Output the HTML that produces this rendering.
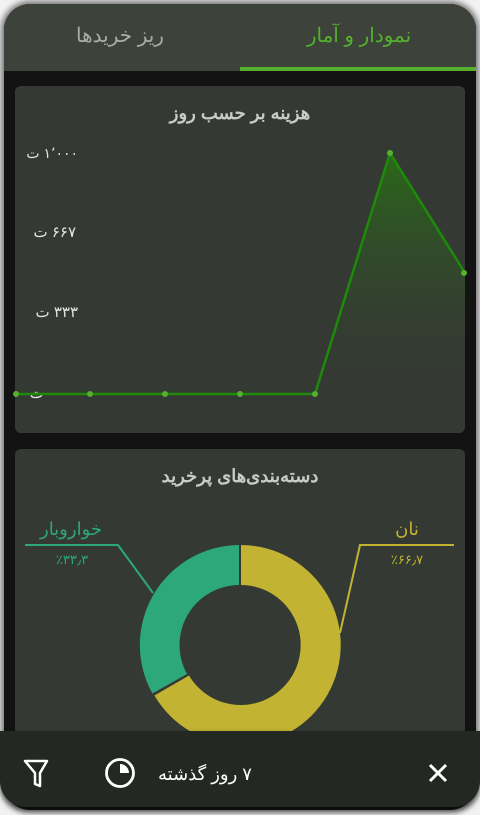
<!DOCTYPE html>
<html><head><meta charset="utf-8"><style>
*{margin:0;padding:0;box-sizing:border-box}
body{width:480px;height:815px;background:#f2f2f2;overflow:hidden;font-family:"Liberation Sans","Noto Sans CJK SC",sans-serif;position:relative}
.app{position:absolute;left:4px;top:4px;width:472px;height:806px;border-radius:26px;background:#131313;overflow:hidden;box-shadow:0 0 6px 3px rgba(0,0,0,.5)}
.hdr{position:absolute;left:-4px;top:-4px;width:480px;height:71px;background:#3d423b}
.ul{position:absolute;left:240px;top:67px;width:240px;height:4px;background:#55b02e}
.card{position:absolute;left:11px;width:450px;background:#343a33;border-radius:6px}
</style></head><body>
<div class="app">
<div class="hdr"><div class="ul"></div></div>
<div class="card" style="top:82px;height:347px"></div>
<div class="card" style="top:445px;height:300px"></div>
</div>
<svg style="position:absolute;left:0;top:0" width="480" height="815">
<g font-family="Liberation Sans,Noto Sans CJK SC,sans-serif" font-size="20" text-anchor="middle">
<text x="120" y="42" fill="#a9aca7" letter-spacing="2">ریز خریدها</text>
<text x="359" y="42" fill="#55b02e" letter-spacing="2">نمودار و آمار</text>
</g>
<text x="240" y="119" text-anchor="middle" fill="#c9cbc7" font-size="18" font-weight="bold" font-family="Liberation Sans,Noto Sans CJK SC,sans-serif">هزینه بر حسب روز</text>
<g fill="#e6e6e6" font-size="15" font-family="Liberation Sans,Noto Sans CJK SC,sans-serif" direction="rtl">
<text x="78" y="158" text-anchor="start" font-size="14">۱٬۰۰۰ ت</text>
<text x="76" y="237" text-anchor="start">۶۶۷ ت</text>
<text x="78" y="317" text-anchor="start">۳۳۳ ت</text>
<text x="56" y="398" text-anchor="start">۰ ت</text>
</g>
<defs><linearGradient id="g" x1="0" y1="0" x2="0" y2="1"><stop offset="0" stop-color="#2a6a18"/><stop offset="1" stop-color="#343a33" stop-opacity="0"/></linearGradient></defs>
<path d="M315,394 L390,153 L465,273 L465,394 Z" fill="url(#g)"/>
<polyline points="15,394 90,394 165,394 240,394 315,394 390,153 465,273" fill="none" stroke="#1e8a0a" stroke-width="2.5"/>
<g fill="#55b02e"><circle cx="16" cy="394" r="3"/><circle cx="90" cy="394" r="3"/><circle cx="165" cy="394" r="3"/><circle cx="240" cy="394" r="3"/><circle cx="315" cy="394" r="3"/><circle cx="390" cy="153" r="3"/><circle cx="464" cy="273" r="3"/></g>
<text x="240" y="482" text-anchor="middle" fill="#c9cbc7" font-size="18" font-weight="bold" font-family="Liberation Sans,Noto Sans CJK SC,sans-serif">دسته‌بندی‌های پرخرید</text>
<path d="M241,545 A100,100 0 1 1 154.4,695.5 L189,675.5 A60,60 0 1 0 241,585 Z" fill="#c2b332"/>
<path d="M239,545 L239,585 A60,60 0 0 0 187,674 L152.4,693.5 A100,100 0 0 1 239,545Z" fill="#2ca87a"/>
<polyline points="25,545 118,545 153,593" fill="none" stroke="#2ca87a" stroke-width="2"/>
<polyline points="454,545 360,545 340,633" fill="none" stroke="#c2b332" stroke-width="2"/>
<g font-family="Liberation Sans,Noto Sans CJK SC,sans-serif">
<text x="71" y="535" text-anchor="middle" fill="#2ca87a" font-size="18">خواروبار</text>
<text x="72" y="564" text-anchor="middle" fill="#2ca87a" font-size="13">٪۳۳٫۳</text>
<text x="407" y="535" text-anchor="middle" fill="#c2b332" font-size="18">نان</text>
<text x="407" y="564" text-anchor="middle" fill="#c2b332" font-size="13">٪۶۶٫۷</text>
</g>
</svg>
<div style="position:absolute;left:0;top:731px;width:480px;height:76px;background:#232822;border-radius:0 0 26px 26px;box-shadow:0 3px 6px rgba(0,0,0,.5)"></div>
<svg style="position:absolute;left:0;top:731px" width="480" height="80">
<path d="M25,30 L47,30 L40,42 L40,55 L35,53 L35,42 Z" fill="none" stroke="#fff" stroke-width="2.5" stroke-linejoin="round"/>
<circle cx="120" cy="42" r="13.5" fill="none" stroke="#fff" stroke-width="2.8"/>
<path d="M120,33 A9,9 0 0 1 129,42 L120,42Z" fill="#fff"/>
<text x="205" y="49" text-anchor="middle" direction="rtl" fill="#fff" font-size="18" font-family="Liberation Sans,Noto Sans CJK SC,sans-serif">۷ روز گذشته</text>
<path d="M430,34 L446,50 M446,34 L430,50" stroke="#fff" stroke-width="3"/>
</svg>
</body></html>
